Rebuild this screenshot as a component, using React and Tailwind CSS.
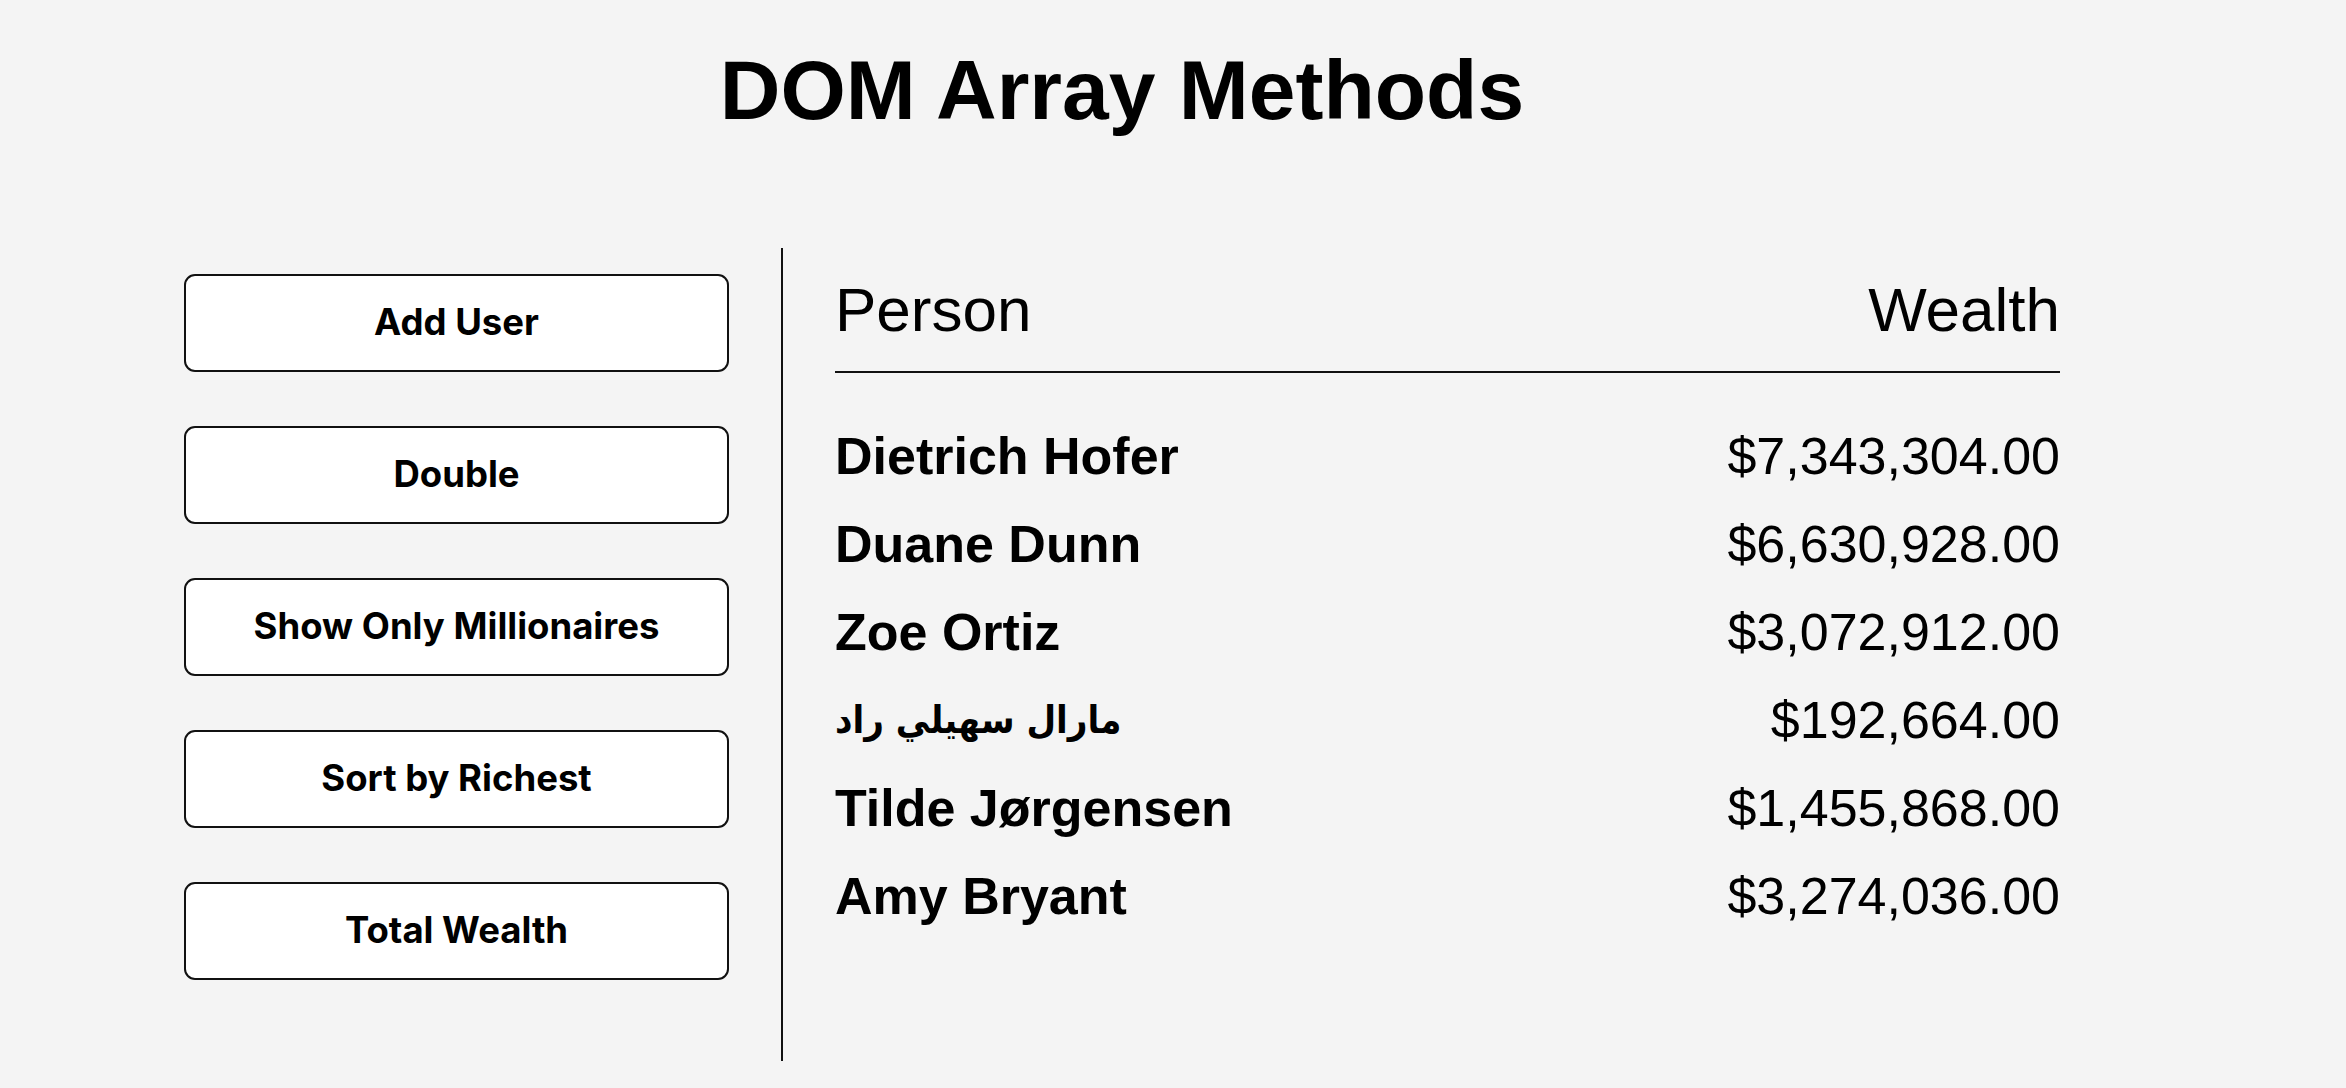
export default function App() {
  const buttons = ["Add User", "Double", "Show Only Millionaires", "Sort by Richest", "Total Wealth"];
  const rows = [
    ["Dietrich Hofer", "$7,343,304.00", false],
    ["Duane Dunn", "$6,630,928.00", false],
    ["Zoe Ortiz", "$3,072,912.00", false],
    ["مارال سهيلي راد", "$192,664.00", true],
    ["Tilde Jørgensen", "$1,455,868.00", false],
    ["Amy Bryant", "$3,274,036.00", false],
  ];
  return (
    <div className="min-h-[1088px] w-full bg-[#f4f4f4] text-black" style={{ fontFamily: '"Liberation Sans", Arial, sans-serif' }}>
      <div className="ml-[184px] w-[1876px]">
        <h1 className="pt-[42px] text-center text-[84px] font-bold leading-[1.149]">DOM Array Methods</h1>
        <div className="mt-[109px] flex h-[813px]">
          <aside className="flex w-[597px] flex-col gap-[54px] pt-[26px] pr-[52px]">
            {buttons.map((b) => (
              <button
                key={b}
                className="h-[98px] w-[545px] rounded-[11px] border-2 border-[#111] bg-white text-[36.5px] font-bold"
                style={{ fontFamily: 'Inter, "Noto Sans", sans-serif' }}
              >
                {b}
              </button>
            ))}
          </aside>
          <div className="w-[2px] bg-[#111]" />
          <main className="ml-[52px] w-[1225px] pt-[26px]">
            <div className="flex justify-between border-b-2 border-[#111] pb-[26px] text-[62px] leading-[1.149]">
              <span>Person</span>
              <span>Wealth</span>
            </div>
            <div className="mt-[40px]">
              {rows.map(([n, w, ar]) => (
                <div key={n} className="flex h-[88px] items-center justify-between text-[52px] leading-[1.149]">
                  {ar ? (
                    <strong
                      className="text-[38px] font-bold"
                      style={{ fontFamily: '"DejaVu Sans Condensed", "DejaVu Sans", sans-serif' }}
                    >
                      {n}
                    </strong>
                  ) : (
                    <strong className="font-bold">{n}</strong>
                  )}
                  <span>{w}</span>
                </div>
              ))}
            </div>
          </main>
        </div>
      </div>
    </div>
  );
}
